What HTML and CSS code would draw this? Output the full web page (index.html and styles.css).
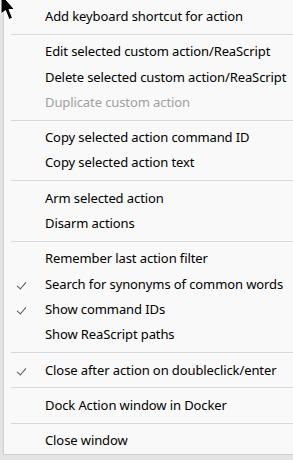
FILE: index.html
```html
<!DOCTYPE html>
<html lang="en">
<head>
    <meta charset="UTF-8">
    <title>Action menu</title>
    <link rel="stylesheet" href="styles.css">
</head>
<body>
    <div class="menu">
        <div class="item">Add keyboard shortcut for action</div>
        <div class="sep"></div>
        <div class="item">Edit selected custom action/ReaScript</div>
        <div class="item">Delete selected custom action/ReaScript</div>
        <div class="item disabled">Duplicate custom action</div>
        <div class="sep"></div>
        <div class="item">Copy selected action command ID</div>
        <div class="item">Copy selected action text</div>
        <div class="sep"></div>
        <div class="item">Arm selected action</div>
        <div class="item">Disarm actions</div>
        <div class="sep"></div>
        <div class="item">Remember last action filter</div>
        <div class="item checked">Search for synonyms of common words</div>
        <div class="item checked">Show command IDs</div>
        <div class="item">Show ReaScript paths</div>
        <div class="sep"></div>
        <div class="item checked">Close after action on doubleclick/enter</div>
        <div class="sep"></div>
        <div class="item">Dock Action window in Docker</div>
        <div class="sep"></div>
        <div class="item">Close window</div>
    </div>
    <div class="strip"></div>

    <!-- mouse pointer sitting over the menu -->
    <svg class="cursor" width="18" height="24" viewBox="0 0 18 24">
        <path d="M1 -6 L1 14 L5.5 10.5 L9 19.5 L12.5 18 L9 9.5 L14.5 9.5 Z" fill="#000" stroke="#fff" stroke-width="1"/>
    </svg>
</body>
</html>
```

FILE: styles.css
```css
body {
    margin: 0;
    background-color: #e4e4e4;
    font-family: "Noto Sans", "Open Sans", sans-serif;
    font-size: 13px;
    letter-spacing: -0.1px;
    color: #000;
    width: 293px;
    height: 460px;
    overflow: hidden;
    position: relative;
}

.menu {
    margin-left: 3px;
    height: 455px;
    box-sizing: border-box;
    padding-top: 4px;
    background-color: #f9f9f9;
    border-left: 1px solid #d0d0d0;
    border-bottom: 1px solid #d0d0d0;
}

.item {
    height: 25.3px;
    line-height: 25.3px;
    padding-left: 41px;
    white-space: nowrap;
    position: relative;
}

.item.disabled {
    color: #a0a0a0;
}

.item.checked::before {
    content: "";
    position: absolute;
    left: 15px;
    top: 8px;
    width: 4px;
    height: 8px;
    border-right: 1.2px solid #555;
    border-bottom: 1.2px solid #555;
    transform: rotate(40deg);
}

.sep {
    height: 10px;
    margin-left: 7px;
    display: flex;
    align-items: center;
}

.sep::after {
    content: "";
    flex: 1;
    height: 1px;
    background-color: #d9d9d9;
}

.strip {
    height: 5px;
}

.cursor {
    position: absolute;
    left: 0;
    top: 0;
}
```
